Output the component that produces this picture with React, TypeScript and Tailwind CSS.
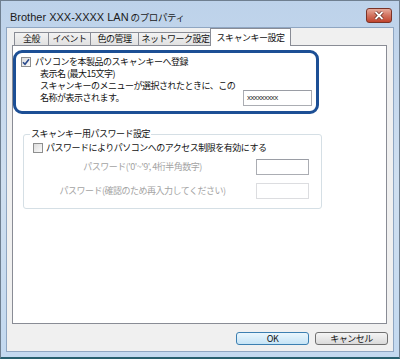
import React from 'react';

const jp = { fontFamily: '"Noto Sans CJK JP", "Liberation Sans", sans-serif' };

const CheckBox = ({ checked }: { checked?: boolean }) => (
  <span className="w-[10px] h-[10px] shrink-0 border border-[#8e8f8f] bg-gradient-to-br from-[#dcdcdc] to-[#fbfbfb] flex items-center justify-center">
    {checked && (
      <svg width="8" height="8" viewBox="0 0 8 8">
        <path d="M1 4.2 L3 6.3 L7 1.2" fill="none" stroke="#2a4a8c" strokeWidth="1.6" />
      </svg>
    )}
  </span>
);

const Tab = ({ label, w, first }: { label: string; w: string; first?: boolean }) => (
  <div
    className={`${w} ${first ? '' : '-ml-px'} h-[13px] border border-b-0 border-[#898c95] bg-gradient-to-b from-[#f3f3f3] to-[#e1e1e1] flex items-center justify-center whitespace-nowrap`}
  >
    {label}
  </div>
);

export default function App() {
  return (
    <div
      className="w-[400px] h-[359px] flex flex-col border-x border-t border-[#6f7f90] border-b-2 border-b-[#28606f] bg-gradient-to-b from-[#bdd2ea] via-[#cfdff0] to-[#c3d9f0] text-[9px] tracking-[-0.5px] text-[#111]"
      style={jp}
    >
      {/* title bar */}
      <div className="h-[26px] flex items-start justify-between pl-[9px] pr-[7px]">
        <div className="mt-[8px] flex items-center text-[#1a1a1a] whitespace-nowrap">
          <span className="text-[11px] tracking-normal" style={{ fontFamily: '"Liberation Sans", sans-serif' }}>
            Brother XXX-XXXX LAN
          </span>
          <span className="text-[9.5px] tracking-[-0.4px] ml-[2px]">のプロパティ</span>
        </div>
        <div className="mt-[7px] w-[26px] h-[15px] rounded-[3px] border border-[#7a3327] bg-gradient-to-b from-[#e6aa9c] via-[#d2725f] to-[#c0432d] flex items-center justify-center">
          <svg width="10" height="9" viewBox="0 0 10 9">
            <path d="M1.5 1 L8.5 8 M8.5 1 L1.5 8" stroke="#5a2018" strokeWidth="3.2" />
            <path d="M1.5 1 L8.5 8 M8.5 1 L1.5 8" stroke="#ffffff" strokeWidth="1.8" />
          </svg>
        </div>
      </div>

      {/* client area */}
      <div className="flex-1 mx-[5px] mb-[5px] border border-[#8fa6c2] bg-[#f0f0f0] flex flex-col">
        {/* tabs */}
        <div className="h-[17px] ml-[7px] flex items-end relative z-10">
          <Tab label="全般" w="w-[35px]" first />
          <Tab label="イベント" w="w-[43px]" />
          <Tab label="色の管理" w="w-[49px]" />
          <Tab label="ネットワーク設定" w="w-[75px]" />
          <div className="-ml-[3px] w-[81px] h-[18px] -mb-px border border-b-0 border-[#898c95] bg-white flex items-center justify-center whitespace-nowrap">
            スキャンキー設定
          </div>
        </div>

        {/* panel */}
        <div className="ml-[5px] mr-[6px] h-[279px] border border-[#898c95] bg-white flex flex-col">
          {/* highlighted box */}
          <div className="mt-[4px] w-[306px] h-[64px] border-[3px] border-[#1c4f95] rounded-[9px] flex flex-col">
            <div className="mt-[4px] ml-[5px] h-[10px] flex items-center gap-[4px] whitespace-nowrap">
              <CheckBox checked />
              <span>パソコンを本製品のスキャンキーへ登録</span>
            </div>
            <div className="mt-px ml-[24px] flex items-start">
              <div className="w-[203px] leading-[12px] whitespace-nowrap">
                <div>表示名 (最大15文字)</div>
                <div>スキャンキーのメニューが選択されたときに、この</div>
                <div>名称が表示されます。</div>
              </div>
              <div
                className="mt-[22px] w-[69px] h-[16px] border border-[#abadb3] border-t-[#9a9da5] bg-white flex items-center pl-[3px] text-[8px] tracking-[-0.6px] text-[#333]"
                style={{ fontFamily: '"Liberation Sans", sans-serif' }}
              >
                xxxxxxxxx
              </div>
            </div>
          </div>

          {/* password group */}
          <fieldset className="mt-[14px] ml-[10px] w-[299px] border border-[#d5dfe5] rounded-[3px] pb-[9px]">
            <legend className="ml-[6px] px-[1px] leading-[12px] whitespace-nowrap">スキャンキー用パスワード設定</legend>
            <div className="mt-[3px] ml-[9px] h-[10px] flex items-center gap-[3px] whitespace-nowrap">
              <CheckBox />
              <span>パスワードによりパソコンへのアクセス制限を有効にする</span>
            </div>
            <div className="mt-[6px] h-[16px] flex items-center">
              <div className="ml-[6px] w-[225px] text-center text-[#a3a3a3] whitespace-nowrap">
                パスワード('0'~'9', 4桁半角数字)
              </div>
              <div className="ml-[1px] w-[53px] h-[16px] border border-[#abadb3] border-t-[#9a9da5] bg-white" />
            </div>
            <div className="mt-[8px] h-[16px] flex items-center">
              <div className="ml-[6px] w-[225px] text-center text-[#a3a3a3] whitespace-nowrap">
                パスワード(確認のため再入力してください)
              </div>
              <div className="ml-[1px] w-[53px] h-[16px] border border-[#dcdde0] bg-white" />
            </div>
          </fieldset>
        </div>

        {/* buttons */}
        <div className="mt-[8px] pr-[5px] flex justify-end gap-[6px]">
          <div className="w-[73px] h-[13px] rounded-[3px] border border-[#3c7fb1] bg-gradient-to-b from-[#eaf6fd] to-[#c6e4f6] flex items-center justify-center">
            OK
          </div>
          <div className="w-[73px] h-[13px] rounded-[3px] border border-[#707070] bg-gradient-to-b from-[#f4f4f4] to-[#dadada] flex items-center justify-center">
            キャンセル
          </div>
        </div>
      </div>
    </div>
  );
}
